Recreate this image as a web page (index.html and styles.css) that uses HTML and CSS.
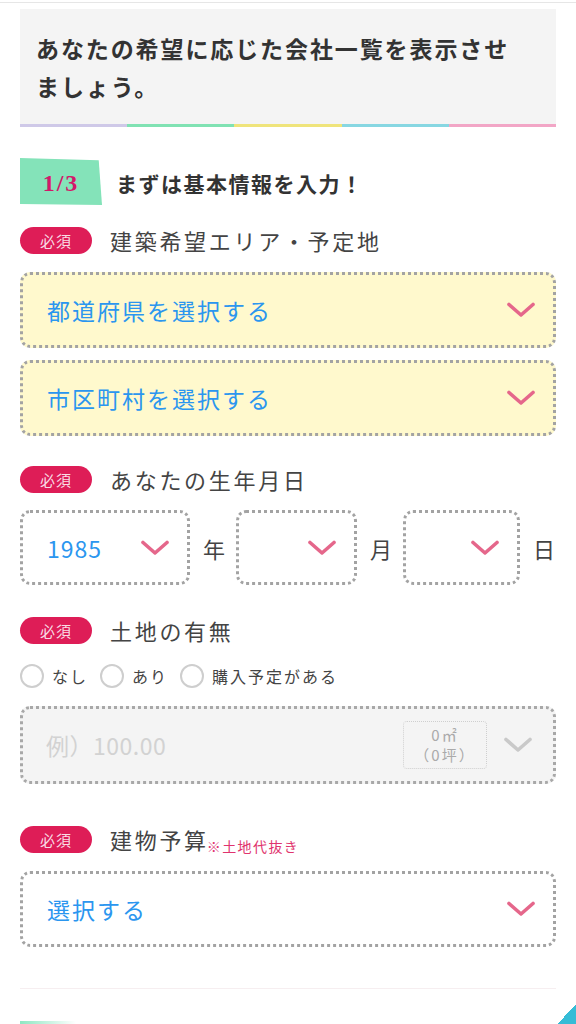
FILE: index.html
```html
<!DOCTYPE html>
<html lang="ja">
<head>
<meta charset="utf-8">
<title>会社一覧</title>
<link rel="stylesheet" href="styles.css">
</head>
<body>
<div class="topline"></div>
<main class="page">
  <section class="intro">
    <h1 class="intro-title">あなたの希望に応じた会社一覧を表示させましょう。</h1>
  </section>
  <div class="colorbar">
    <span class="c1"></span><span class="c2"></span><span class="c3"></span><span class="c4"></span><span class="c5"></span>
  </div>

  <div class="step">
    <div class="step-num">1/3</div>
    <div class="step-title">まずは基本情報を入力！</div>
  </div>

  <div class="label-row first">
    <span class="req">必須</span>
    <span class="label">建築希望エリア・予定地</span>
  </div>
  <div class="select yellow field">
    <span class="select-text">都道府県を選択する</span>
    <svg class="chev" width="28" height="16" viewBox="0 0 28 16"><polyline points="2,2.5 14,13 26,2.5" fill="none" stroke="#e5678b" stroke-width="3.6" stroke-linecap="round" stroke-linejoin="round"/></svg>
  </div>
  <div class="select yellow field2">
    <span class="select-text">市区町村を選択する</span>
    <svg class="chev" width="28" height="16" viewBox="0 0 28 16"><polyline points="2,2.5 14,13 26,2.5" fill="none" stroke="#e5678b" stroke-width="3.6" stroke-linecap="round" stroke-linejoin="round"/></svg>
  </div>

  <div class="label-row">
    <span class="req">必須</span>
    <span class="label">あなたの生年月日</span>
  </div>
  <div class="date-row">
    <div class="select date d1">
      <span class="select-text num">1985</span>
      <svg class="chev" width="28" height="16" viewBox="0 0 28 16"><polyline points="2,2.5 14,13 26,2.5" fill="none" stroke="#e5678b" stroke-width="3.6" stroke-linecap="round" stroke-linejoin="round"/></svg>
    </div>
    <span class="unit">年</span>
    <div class="select date d2">
      <span class="select-text"></span>
      <svg class="chev" width="28" height="16" viewBox="0 0 28 16"><polyline points="2,2.5 14,13 26,2.5" fill="none" stroke="#e5678b" stroke-width="3.6" stroke-linecap="round" stroke-linejoin="round"/></svg>
    </div>
    <span class="unit">月</span>
    <div class="select date d3">
      <span class="select-text"></span>
      <svg class="chev" width="28" height="16" viewBox="0 0 28 16"><polyline points="2,2.5 14,13 26,2.5" fill="none" stroke="#e5678b" stroke-width="3.6" stroke-linecap="round" stroke-linejoin="round"/></svg>
    </div>
    <span class="unit">日</span>
  </div>

  <div class="label-row l3">
    <span class="req">必須</span>
    <span class="label">土地の有無</span>
  </div>
  <div class="radios">
    <label class="radio"><span class="circle"></span><span>なし</span></label>
    <label class="radio"><span class="circle"></span><span>あり</span></label>
    <label class="radio"><span class="circle"></span><span>購入予定がある</span></label>
  </div>
  <div class="area-input">
    <span class="placeholder">例）100.00</span>
    <div class="area-unit"><span>0㎡</span><span>（0坪）</span></div>
    <svg class="chev" width="28" height="16" viewBox="0 0 28 16"><polyline points="2,2.5 14,13 26,2.5" fill="none" stroke="#c9c9c9" stroke-width="3.6" stroke-linecap="round" stroke-linejoin="round"/></svg>
  </div>

  <div class="label-row l4">
    <span class="req">必須</span>
    <span class="label">建物予算</span><span class="note">※土地代抜き</span>
  </div>
  <div class="select white field">
    <span class="select-text">選択する</span>
    <svg class="chev" width="28" height="16" viewBox="0 0 28 16"><polyline points="2,2.5 14,13 26,2.5" fill="none" stroke="#e5678b" stroke-width="3.6" stroke-linecap="round" stroke-linejoin="round"/></svg>
  </div>

  <hr class="divider">
</main>
<div class="footer-deco"></div>
</body>
</html>
```

FILE: styles.css
```css
* { box-sizing: border-box; }
html, body { margin: 0; padding: 0; background: #fff; }
body {
  font-family: "Noto Sans CJK JP", "Noto Sans", sans-serif;
  color: #444;
  padding-top: 2px;
  overflow: hidden;
}
.topline { height: 1px; background: #e6e6e6; }
.page { padding: 0 20px; }

.intro {
  margin-top: 6px;
  background: #f4f4f4;
  padding: 20px 26px 19px 16px;
}
.intro-title {
  margin: 0;
  font-size: 23px;
  line-height: 38px;
  font-weight: 700;
  letter-spacing: 1.9px;
  color: #333;
}
.colorbar { display: flex; height: 3px; }
.colorbar span { flex: 1; }
.c1 { background: #cfc9e8; }
.c2 { background: #80e2b3; }
.c3 { background: #efe47b; }
.c4 { background: #87d7e2; }
.c5 { background: #f2a6c6; }

.step {
  margin-top: 31px;
  display: flex;
  align-items: center;
  gap: 14px;
  height: 47px;
}
.step-num {
  width: 82px;
  height: 47px;
  background: #84e3b9;
  clip-path: polygon(0 0, 96% 5%, 100% 100%, 0 98%);
  display: flex;
  align-items: center;
  justify-content: center;
  font-family: "Liberation Serif", "DejaVu Serif", serif;
  font-weight: 700;
  font-size: 24px;
  letter-spacing: 2px;
  color: #d2186a;
  padding-top: 3px;
}
.step-title {
  font-size: 21px;
  font-weight: 700;
  letter-spacing: 1.5px;
  color: #333;
  padding-top: 2px;
}

.label-row {
  display: flex;
  align-items: center;
  height: 28px;
  margin-top: 29px;
}
.label-row.first { margin-top: 21px; }
.label-row.l3 { margin-top: 31px; }
.label-row.l4 { margin-top: 41px; }
.req {
  width: 72px;
  height: 27px;
  border-radius: 14px;
  background: #de1d57;
  color: #f9dbe4;
  font-size: 15px;
  letter-spacing: 1px;
  display: flex;
  align-items: center;
  justify-content: center;
  margin-right: 18px;
}
.label {
  font-size: 22px;
  letter-spacing: 2.7px;
  color: #444;
}
.note {
  font-size: 14px;
  letter-spacing: 1.4px;
  color: #e0336e;
  align-self: flex-end;
  margin-left: -2px;
  margin-bottom: -3px;
}

.select {
  display: flex;
  align-items: center;
  justify-content: space-between;
  border: 3px dotted #a3a3a3;
  border-radius: 10px;
  height: 76px;
  padding: 0 18px 0 24px;
}
.select.yellow { background: #fff9cd; }
.select.white { background: #fff; }
.field { margin-top: 18px; }
.field2 { margin-top: 12px; }
.select-text {
  font-size: 23px;
  letter-spacing: 2px;
  color: #2b96ef;
}
.chev { display: block; flex: none; }

.date-row {
  margin-top: 17px;
  display: flex;
  align-items: center;
}
.select.date { height: 75px; padding-right: 18px; }
.d1 { width: 170px; }
.d2 { width: 121px; }
.d3 { width: 117px; }
.unit {
  font-size: 22px;
  color: #444;
  width: 22px;
  margin: 0 11px 0 13px;
}
.unit:last-child { margin-right: 0; margin-left: 13px; }
.num { letter-spacing: 1px; }

.radios {
  margin-top: 19px;
  display: flex;
  align-items: center;
  gap: 12px;
  height: 26px;
}
.radio {
  display: flex;
  align-items: center;
  gap: 8px;
  font-size: 16px;
  letter-spacing: 2px;
  color: #444;
}
.circle {
  width: 24px;
  height: 24px;
  border-radius: 50%;
  border: 2.5px solid #cecece;
  background: #fff;
  flex: none;
}

.area-input {
  margin-top: 17px;
  height: 78px;
  border: 3px dotted #a8a8a8;
  border-radius: 10px;
  background: #f4f4f4;
  display: flex;
  align-items: center;
  padding: 0 21px 0 23px;
}
.placeholder {
  flex: 1;
  font-size: 23px;
  letter-spacing: 0.5px;
  color: #d2d2d2;
}
.area-unit {
  width: 84px;
  height: 48px;
  border: 1px dotted #cfcfcf;
  border-radius: 4px;
  display: flex;
  flex-direction: column;
  align-items: center;
  justify-content: center;
  font-size: 15px;
  line-height: 20px;
  letter-spacing: 2px;
  color: #aaa;
  margin-right: 17px;
}

.divider {
  margin: 41px 0 0;
  border: 0;
  height: 1px;
  background: #f6eef0;
}
.footer-deco {
  margin-top: 16px;
  height: 19px;
  background:
    linear-gradient(to bottom right, transparent 50%, #35bcd6 50%) right bottom / 19px 19px no-repeat,
    linear-gradient(to right, #8ee7c2, rgba(142,231,194,0)) 20px bottom / 56px 3px no-repeat;
}
```
